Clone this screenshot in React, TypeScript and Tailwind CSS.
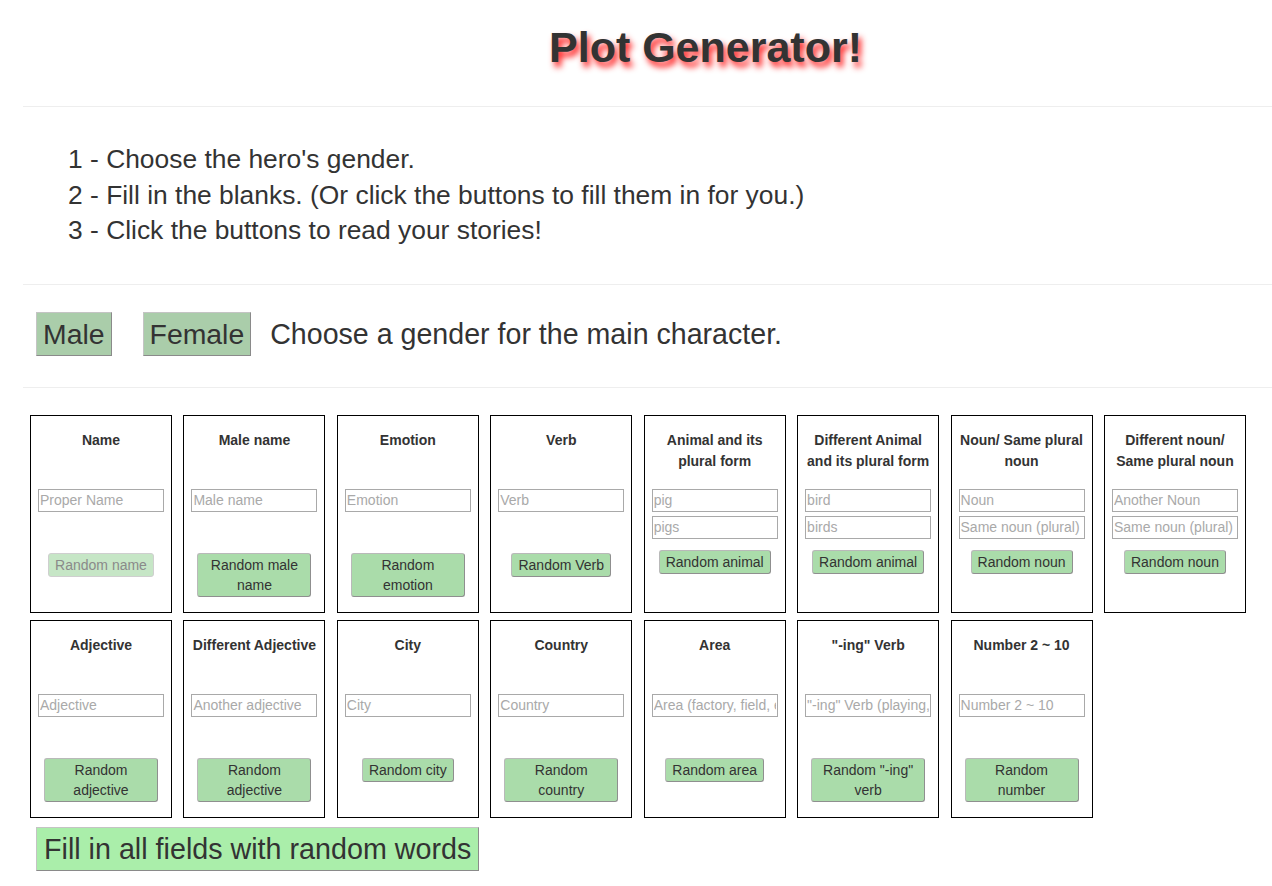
import React from "react";

type Card = {
  title: string;
  placeholders: string[];
  button: string;
  disabled?: boolean;
};

const row1: Card[] = [
  { title: "Name", placeholders: ["Proper Name"], button: "Random name", disabled: true },
  { title: "Male name", placeholders: ["Male name"], button: "Random male name" },
  { title: "Emotion", placeholders: ["Emotion"], button: "Random emotion" },
  { title: "Verb", placeholders: ["Verb"], button: "Random Verb" },
  { title: "Animal and its plural form", placeholders: ["pig", "pigs"], button: "Random animal" },
  { title: "Different Animal and its plural form", placeholders: ["bird", "birds"], button: "Random animal" },
  { title: "Noun/ Same plural noun", placeholders: ["Noun", "Same noun (plural)"], button: "Random noun" },
  { title: "Different noun/ Same plural noun", placeholders: ["Another Noun", "Same noun (plural)"], button: "Random noun" },
];

const row2: Card[] = [
  { title: "Adjective", placeholders: ["Adjective"], button: "Random adjective" },
  { title: "Different Adjective", placeholders: ["Another adjective"], button: "Random adjective" },
  { title: "City", placeholders: ["City"], button: "Random city" },
  { title: "Country", placeholders: ["Country"], button: "Random country" },
  { title: "Area", placeholders: ["Area (factory, field, etc.)"], button: "Random area" },
  { title: '"-ing" Verb', placeholders: ['"-ing" Verb (playing, running)'], button: 'Random "-ing" verb' },
  { title: "Number 2 ~ 10", placeholders: ["Number 2 ~ 10"], button: "Random number" },
];

function CardBox({ c }: { c: Card }) {
  const double = c.placeholders.length > 1;
  return (
    <div className="h-[198px] w-[142px] border border-black px-[7px] pt-[14px] flex flex-col items-center">
      <div className="h-[42px] w-full text-center text-[14px] leading-[21px] font-bold text-[#333]">
        {c.title}
      </div>
      <div className="mt-[17px] flex w-full flex-col gap-[4px]">
        {c.placeholders.map((p, i) => (
          <input
            key={i}
            type="text"
            placeholder={p}
            className="h-[23px] w-full border border-[#a9a9a9] bg-white px-[1px] text-[14px] text-[#333] outline-none placeholder:text-[#a9a9a9]"
          />
        ))}
      </div>
      <button
        className={
          (double ? "mt-[11px] " : "mt-[41px] ") +
          (c.disabled
            ? "bg-[#c6e6c6] text-[#8a8a8a] border-[#cfcfcf] "
            : "bg-[#aadcaa] text-[#333] border-[#b9b9b9] border-b-[#8f8f8f] border-r-[#8f8f8f] ") +
          "max-w-[114px] rounded-[3px] border px-[6px] py-[1px] text-center text-[14px] leading-[20px]"
        }
      >
        {c.button}
      </button>
    </div>
  );
}

export default function App() {
  return (
    <div
      className="min-h-[886px] w-full bg-white text-[#333]"
      style={{ fontFamily: '"Liberation Sans", Arial, sans-serif' }}
    >
      <div className="pl-[139px] pt-[24px] text-center">
        <h1 className="text-[43px] font-bold leading-[47px] text-[#333] [text-shadow:3px_5px_6px_#ff1a1a]">
          Plot Generator!
        </h1>
      </div>
      <div className="ml-[23px] mt-[35px] border-t border-[#eeeeee]" />

      <div className="mt-[35px] pl-[68px] text-[26.4px] leading-[35.5px]">
        <div>1 - Choose the hero's gender.</div>
        <div>2 - Fill in the blanks. (Or click the buttons to fill them in for you.)</div>
        <div>3 - Click the buttons to read your stories!</div>
      </div>
      <div className="ml-[23px] mt-[35px] border-t border-[#eeeeee]" />

      <div className="mt-[27px] flex items-center pl-[36px]">
        <button className="h-[44px] border border-[#c4c4c4] border-b-[#8a8a8a] border-r-[#8a8a8a] bg-[#aacdaa] px-[6px] text-[28.4px] leading-[40px] text-[#333]">
          Male
        </button>
        <button className="ml-[31px] h-[44px] border border-[#c4c4c4] border-b-[#8a8a8a] border-r-[#8a8a8a] bg-[#aacdaa] px-[6px] text-[28.4px] leading-[40px] text-[#333]">
          Female
        </button>
        <span className="ml-[19px] text-[28.6px] leading-[40px]">
          Choose a gender for the main character.
        </span>
      </div>
      <div className="ml-[23px] mt-[31px] border-t border-[#eeeeee]" />

      <div className="ml-[30px] mt-[27px] grid w-[1216px] grid-cols-[repeat(8,142px)] gap-x-[11.43px] gap-y-[7px]">
        {row1.map((c, i) => (
          <CardBox key={"a" + i} c={c} />
        ))}
        {row2.map((c, i) => (
          <CardBox key={"b" + i} c={c} />
        ))}
      </div>

      <div className="mt-[9px] pl-[36px] pb-[16px]">
        <button className="h-[44px] border border-[#c4c4c4] border-b-[#8a8a8a] border-r-[#8a8a8a] bg-[#aaeeaa] px-[7px] text-[28.7px] leading-[40px] text-[#333]">
          Fill in all fields with random words
        </button>
      </div>
    </div>
  );
}
